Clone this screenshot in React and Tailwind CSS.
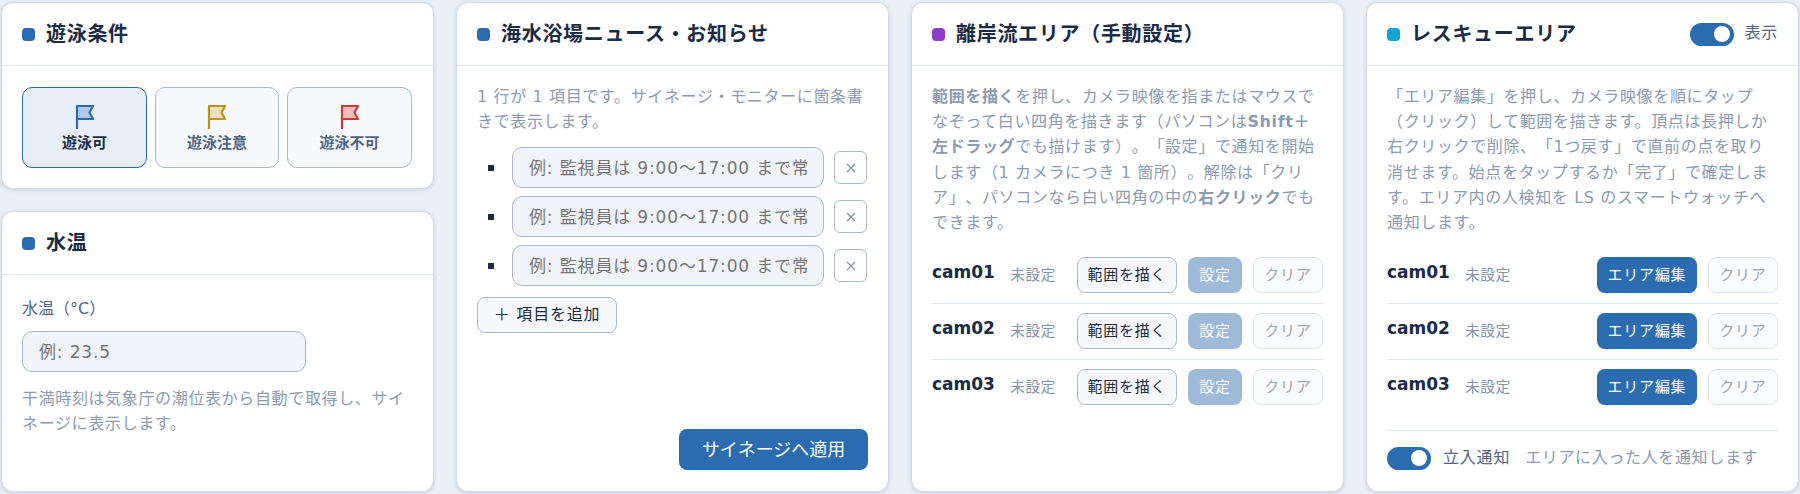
const Dot = ({ color }) => <span className={`w-[13px] h-[13px] rounded-[4px] shrink-0 ${color}`} />;

const Toggle = () => (
  <span className="w-[44px] h-[23px] rounded-full bg-[#2b6cb0] flex items-center justify-end pr-[4px] shrink-0">
    <span className="w-[16px] h-[16px] rounded-full bg-white" />
  </span>
);

const Card = ({ title, dot, right, className = '', children }) => (
  <section className={`bg-white border border-[#cfdbe8] rounded-[12px] shadow-[0_1px_4px_rgba(60,90,130,0.22)] flex flex-col overflow-hidden ${className}`}>
    <header className="h-[63px] shrink-0 border-b border-[#e0e7f0] px-[20px] flex items-center gap-[11px]">
      <Dot color={dot} />
      <h2 className="text-[20px] font-bold tracking-[0.7px] text-[#1a2b45]">{title}</h2>
      {right}
    </header>
    {children}
  </section>
);

const Flag = ({ stroke, fill }) => (
  <svg width="20" height="26" viewBox="0 0 20 26" fill="none" strokeWidth="2.2" strokeLinejoin="round" className={stroke}>
    <path d="M2 2H18L14.5 8.5L18 15H2Z" className={fill} stroke="none" />
    <path d="M2 25V2H18L14.5 8.5L18 15H2" />
  </svg>
);

const FlagButton = ({ label, active, stroke, fill }) => (
  <button className={`h-[81px] rounded-[10px] border-[1.5px] flex flex-col items-center pt-[16px] gap-[2px] text-[15px] font-bold ${active ? 'border-[#2b6cb0] bg-[#e8eef7] text-[#1a2b45]' : 'border-[#a9b9cd] bg-[#f6f8fb] text-[#4f6585]'}`}>
    <Flag stroke={stroke} fill={fill} />
    <span className="leading-[22px]">{label}</span>
  </button>
);

const NewsRow = () => (
  <li className="flex items-center">
    <span className="w-[6px] h-[6px] bg-[#1a2b45] ml-[11px] mr-[18px] shrink-0" />
    <input
      readOnly
      placeholder="例: 監視員は 9:00〜17:00 まで常"
      className="w-[312px] h-[41px] px-[16px] rounded-[10px] border-[1.5px] border-[#a9b9cd] bg-[#f0f4f9] text-[17px] tracking-[0.05em] placeholder:text-[#757575] outline-none"
    />
    <button className="ml-[10px] w-[33px] h-[33px] rounded-[6px] border-[1.5px] border-[#a9b9cd] bg-white flex items-center justify-center">
      <svg width="12" height="12" viewBox="0 0 12 12" stroke="#7e90a8" strokeWidth="1.2" fill="none">
        <path d="M2 2L10 10M10 2L2 10" />
      </svg>
    </button>
  </li>
);

const CamRow = ({ name, last, children }) => (
  <div className={`flex items-center h-[36px] box-content ${last ? '' : 'pb-[10px] mb-[9px] border-b border-[#e2e8f0]'}`}>
    <span className="text-[17px] font-bold text-[#1a2b45] w-[78px] shrink-0 -mt-[5px]">{name}</span>
    <span className="text-[15px] text-[#8496ad] tracking-[0.02em]">未設定</span>
    <div className="ml-auto flex items-center gap-[11px]">{children}</div>
  </div>
);

const ClearButton = () => (
  <button className="w-[70px] h-[36px] rounded-[8px] border-[1.5px] border-[#e0e7f0] bg-[#f9fbfd] text-[15px] tracking-[0.05em] text-[#a0a6ae]">クリア</button>
);

const Muted = ({ className = '', children }) => (
  <p className={`text-[16px] leading-[25.2px] tracking-[0.04em] text-[#8a9bb2] ${className}`}>{children}</p>
);

export default function App() {
  const cams = ['cam01', 'cam02', 'cam03'];

  return (
    <div className="w-[1800px] h-[494px] bg-[#ebf0f8] px-px py-[2px] grid grid-cols-4 gap-[22px] overflow-hidden font-['DejaVu_Sans','Noto_Sans_CJK_JP',sans-serif] [text-spacing-trim:space-all]">
      {/* Left column */}
      <div className="flex flex-col gap-[22px] min-h-0">
        <Card title="遊泳条件" dot="bg-[#2b6cb0]" className="h-[187px]">
          <div className="grid grid-cols-[125px_124px_125px] gap-[8px] px-[20px] pt-[21px]">
            <FlagButton label="遊泳可" active stroke="stroke-[#2b6cb0]" fill="fill-[#b3cbe8]" />
            <FlagButton label="遊泳注意" stroke="stroke-[#b7931f]" fill="fill-[#eadfb8]" />
            <FlagButton label="遊泳不可" stroke="stroke-[#c53d38]" fill="fill-[#f0bcbc]" />
          </div>
        </Card>
        <Card title="水温" dot="bg-[#2b6cb0]" className="flex-1">
          <div className="px-[20px] pt-[22px]">
            <label className="block text-[16px] leading-[24px] text-[#4f6585]">水温（°C）</label>
            <input
              readOnly
              placeholder="例: 23.5"
              className="block mt-[10px] w-[284px] h-[41px] px-[16px] rounded-[10px] border-[1.5px] border-[#a9b9cd] bg-[#f0f4f9] text-[17px] tracking-[0.05em] placeholder:text-[#757575] outline-none"
            />
            <Muted className="mt-[14px]">干満時刻は気象庁の潮位表から自動で取得し、サイネージに表示します。</Muted>
          </div>
        </Card>
      </div>

      {/* News */}
      <Card title="海水浴場ニュース・お知らせ" dot="bg-[#2b6cb0]">
        <div className="flex-1 flex flex-col px-[20px] pt-[18px] pb-[21px]">
          <Muted>1 行が 1 項目です。サイネージ・モニターに箇条書きで表示します。</Muted>
          <ul className="mt-[13px] flex flex-col gap-[8px]">
            <NewsRow />
            <NewsRow />
            <NewsRow />
          </ul>
          <button className="mt-[11px] self-start w-[140px] h-[36px] rounded-[8px] border-[1.5px] border-[#a9b9cd] bg-[#f6f8fb] text-[16px] tracking-[0.05em] text-[#1a2b45]">＋ 項目を追加</button>
          <button className="mt-auto self-end w-[189px] h-[41px] rounded-[8px] bg-[#2b6cb0] text-white text-[18px]">サイネージへ適用</button>
        </div>
      </Card>

      {/* Rip current */}
      <Card title="離岸流エリア（手動設定）" dot="bg-[#8b3fc7]">
        <div className="px-[20px] pt-[18px]">
          <Muted>
            <b>範囲を描く</b>を押し、カメラ映像を指またはマウスでなぞって白い四角を描きます（パソコンは<b>Shift＋左ドラッグ</b>でも描けます）。「設定」で通知を開始します（1 カメラにつき 1 箇所）。解除は「クリア」、パソコンなら白い四角の中の<b>右クリック</b>でもできます。
          </Muted>
          <div className="mt-[22px]">
            {cams.map((cam, i) => (
              <CamRow key={cam} name={cam} last={i === 2}>
                <button className="w-[100px] h-[36px] rounded-[8px] border-[1.5px] border-[#a9b9cd] bg-[#f6f8fb] text-[15px] tracking-[0.05em] text-[#1a2b45]">範囲を描く</button>
                <button className="w-[54px] h-[36px] rounded-[8px] bg-[#9fb9d9] text-[15px] tracking-[0.05em] text-white">設定</button>
                <ClearButton />
              </CamRow>
            ))}
          </div>
        </div>
      </Card>

      {/* Rescue */}
      <Card
        title="レスキューエリア"
        dot="bg-[#11a5d6]"
        right={
          <div className="ml-auto flex items-center gap-[10px]">
            <Toggle />
            <span className="text-[16px] tracking-[0.05em] text-[#4f6585] -mt-[3px]">表示</span>
          </div>
        }
      >
        <div className="px-[20px] pt-[18px]">
          <Muted>「エリア編集」を押し、カメラ映像を順にタップ（クリック）して範囲を描きます。頂点は長押しか右クリックで削除、「1つ戻す」で直前の点を取り消せます。始点をタップするか「完了」で確定します。エリア内の人検知を LS のスマートウォッチへ通知します。</Muted>
          <div className="mt-[22px]">
            {cams.map((cam, i) => (
              <CamRow key={cam} name={cam} last={i === 2}>
                <button className="w-[100px] h-[36px] rounded-[8px] bg-[#2b6cb0] text-[15px] tracking-[0.05em] text-white">エリア編集</button>
                <ClearButton />
              </CamRow>
            ))}
          </div>
          <div className="mt-[25px] pt-[15px] border-t border-[#e2e8f0] flex items-center">
            <Toggle />
            <span className="ml-[12px] text-[16px] tracking-[0.05em] text-[#4f6585]">立入通知</span>
            <span className="ml-[15px] text-[16px] tracking-[0.04em] text-[#8a9bb2]">エリアに入った人を通知します</span>
          </div>
        </div>
      </Card>
    </div>
  );
}
